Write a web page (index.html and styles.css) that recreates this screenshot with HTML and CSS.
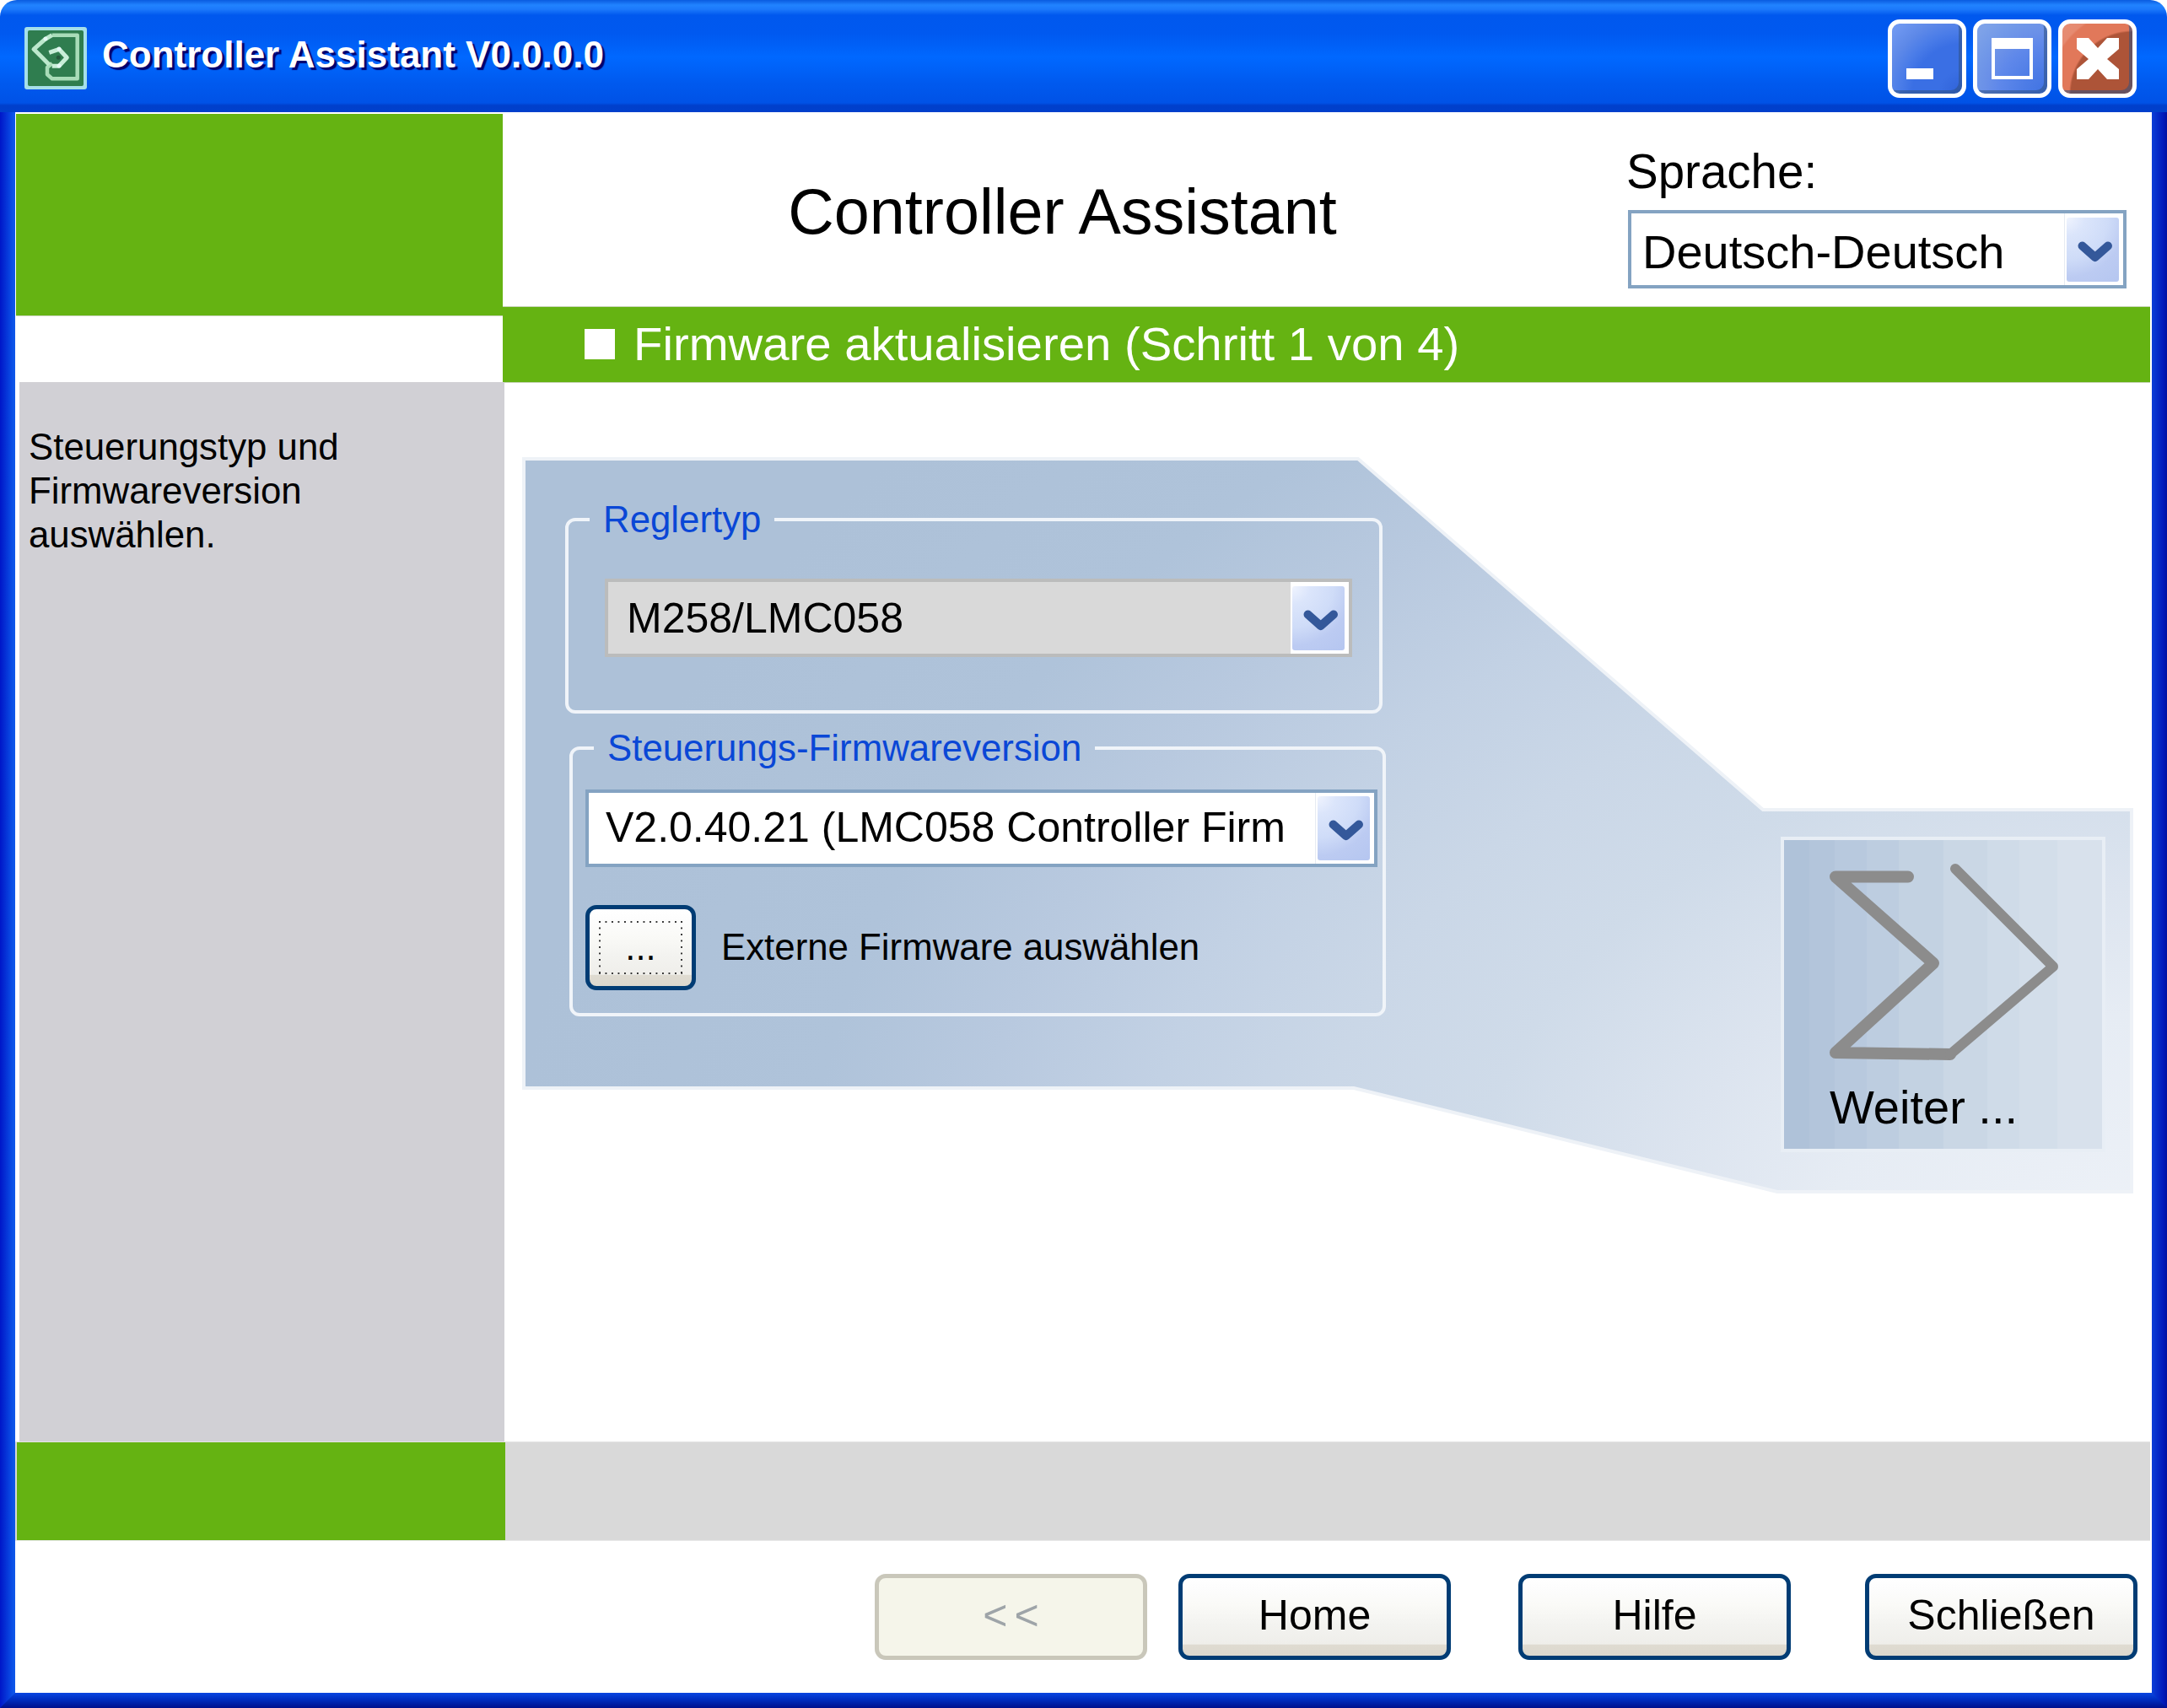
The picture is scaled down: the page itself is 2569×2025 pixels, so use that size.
FILE: index.html
```html
<!DOCTYPE html>
<html lang="de">
<head>
<meta charset="utf-8">
<title>Controller Assistant</title>
<link rel="stylesheet" href="styles.css">
</head>
<body>
<div class="window">
  <header class="titlebar">
    <svg class="app-icon" viewBox="0 0 74 74">
      <rect x="0" y="0" width="74" height="74" rx="3" fill="#a5dfe9"/>
      <rect x="4" y="4" width="66" height="66" rx="2" fill="#2f7d4f"/>
      <path d="M32.700 9.700H62.700V61.300H32.700L27 56.300V48L32.700 43" fill="none" stroke="#a8dcb8" stroke-width="4.500" stroke-linejoin="round"/>
      <path d="M32.700 9.700L24.300 14.700L11 26.300L21 36.300L29.300 44.700" fill="none" stroke="#bce8cc" stroke-width="5" stroke-linejoin="round"/>
      <path d="M29.300 30.300L41 26.300L50.300 36.300L41 46.300H32.700" fill="none" stroke="#c8eed8" stroke-width="5" stroke-linejoin="round"/>
      <circle cx="40.300" cy="36.300" r="2.500" fill="#24583c"/>
      <circle cx="25" cy="14" r="2.500" fill="#e4f8f4"/>
      <circle cx="41" cy="26" r="2.500" fill="#e4f8f4"/>
      <circle cx="41" cy="46" r="2.500" fill="#e4f8f4"/>
    </svg>
    <div class="app-title">Controller Assistant V0.0.0.0</div>
    <div class="wincontrols">
      <button class="winbtn winbtn-blue"><svg viewBox="0 0 83 83"><rect x="17" y="53" width="32" height="13" fill="#fff"/></svg></button>
      <button class="winbtn winbtn-blue winbtn-light"><svg viewBox="0 0 83 83"><path fill-rule="evenodd" d="M17 17H66V66H17ZM21 30V62H62V30Z" fill="#fff"/></svg></button>
      <button class="winbtn winbtn-red"><svg viewBox="0 0 83 83"><path d="M17 17H31L42 29L53 17H67V30L53 42L67 54V66H53L42 54L31 66H17V54L31 42L17 30Z" fill="#fff"/></svg></button>
    </div>
  </header>

  <div class="frame">
    <div class="edge edge-left"></div>
    <main class="client">
      <section class="top">
        <div class="top-left"><div class="green-block"></div></div>
        <div class="top-right">
          <div class="header">
            <h1 class="heading">Controller Assistant</h1>
            <div class="lang">
              <div class="lang-label">Sprache:</div>
              <div class="combo combo-lang">
                <span class="combo-text">Deutsch-Deutsch</span>
                <span class="combo-cell combo-cell-line"><span class="combo-btn"><svg viewBox="0 0 62 76"><path d="M18.500 33.500L33.700 47L49 33.500" fill="none" stroke="#34589a" stroke-width="10" stroke-linecap="round" stroke-linejoin="round"/></svg></span></span>
              </div>
            </div>
          </div>
          <div class="stepbar"><span class="step-square"></span><span class="step-text">Firmware aktualisieren (Schritt 1 von 4)</span></div>
        </div>
      </section>

      <section class="middle">
        <aside class="sidebar">Steuerungstyp und<br>Firmwareversion<br>auswählen.</aside>
        <div class="content">
          <div class="stage">
            <svg class="stage-bg" viewBox="0 0 1911 873">
              <defs>
                <radialGradient id="sweep" gradientUnits="userSpaceOnUse" cx="0" cy="0" r="1500" gradientTransform="translate(1930 960) scale(1.3 1)">
                  <stop offset="0" stop-color="#eef2f8"/>
                  <stop offset=".2" stop-color="#e6ecf4"/>
                  <stop offset=".3" stop-color="#dce4ef"/>
                  <stop offset=".42" stop-color="#cfdbe9"/>
                  <stop offset=".52" stop-color="#cad7e7"/>
                  <stop offset=".62" stop-color="#c2d1e4"/>
                  <stop offset=".72" stop-color="#b8c9df"/>
                  <stop offset=".82" stop-color="#afc3da"/>
                  <stop offset="1" stop-color="#adc1d8"/>
                </radialGradient>
              </defs>
              <path d="M2 2H991L1471 418H1908V871H1488L986 748H2Z" fill="url(#sweep)" stroke="#eef2f7" stroke-width="4"/>
            </svg>
            <div class="groups">
              <fieldset class="group group-type">
                <legend>Reglertyp</legend>
                <div class="combo combo-type">
                  <span class="combo-text">M258/LMC058</span>
                  <span class="combo-cell"><span class="combo-btn"><svg viewBox="0 0 62 76"><path d="M18.500 33.500L33.700 47L49 33.500" fill="none" stroke="#34589a" stroke-width="10" stroke-linecap="round" stroke-linejoin="round"/></svg></span></span>
                </div>
              </fieldset>
              <fieldset class="group group-fw">
                <legend>Steuerungs-Firmwareversion</legend>
                <div class="combo combo-fw">
                  <span class="combo-text">V2.0.40.21 (LMC058 Controller Firm</span>
                  <span class="combo-cell combo-cell-line"><span class="combo-btn"><svg viewBox="0 0 62 76"><path d="M18.500 33.500L33.700 47L49 33.500" fill="none" stroke="#34589a" stroke-width="10" stroke-linecap="round" stroke-linejoin="round"/></svg></span></span>
                </div>
                <div class="browse-row">
                  <button class="btn btn-browse"><span class="focus-dots">...</span></button>
                  <span class="browse-label">Externe Firmware auswählen</span>
                </div>
              </fieldset>
            </div>
            <button class="next">
              <svg class="next-icon" viewBox="0 0 377 285">
                <path d="M147 43.500H61L177 146L61 252L197 254" fill="none" stroke="#8c8c8c" stroke-width="14" stroke-linecap="round" stroke-linejoin="round"/>
                <path d="M197 254L319 150L203 34" fill="none" stroke="#8c8c8c" stroke-width="12" stroke-linecap="round" stroke-linejoin="round"/>
              </svg>
              <span class="next-label">Weiter ...</span>
            </button>
          </div>
        </div>
      </section>

      <section class="band"><div class="band-green"></div></section>

      <footer class="actions">
        <button class="btn btn-action btn-disabled btn-back">&lt;&lt;</button>
        <button class="btn btn-action btn-home">Home</button>
        <button class="btn btn-action btn-help">Hilfe</button>
        <button class="btn btn-action btn-close">Schließen</button>
      </footer>
    </main>
    <div class="edge edge-right"></div>
    <div class="edge-bottom"></div>
  </div>
</div>
</body>
</html>
```

FILE: styles.css
```css
* { box-sizing: border-box; }
html, body { margin: 0; padding: 0; background: #fff; }
body { width: 2569px; height: 2025px; overflow: hidden; font-family: "Liberation Sans", Arial, sans-serif; color: #000; }
button { font-family: inherit; padding: 0; }

.window { width: 2569px; height: 2025px; display: flex; flex-direction: column; }

/* Title bar */
.titlebar {
  height: 133px; flex: none; display: flex; align-items: center;
  border-radius: 20px 20px 0 0;
  background: linear-gradient(180deg, #0a5be0 0, #2183ff 6px, #1c79fb 11px, #0058ee 18px, #0059f0 40px, #0068ff 68px, #0059ee 100px, #0052e6 122px, #003fcb 125px, #0040cc 133px);
}
.app-icon { width: 74px; height: 74px; margin-left: 29px; margin-top: 5px; flex: none; }
.app-title {
  margin-left: 18px; margin-bottom: 4px; font-size: 44px; line-height: 50px; font-weight: 700; color: #fff;
  text-shadow: 3px 3px 1px #00006e;
}
.wincontrols { margin-left: auto; margin-right: 36px; margin-top: 6px; display: flex; gap: 8px; }
.winbtn {
  width: 93px; height: 93px; border: 5px solid #fff; border-radius: 14px; display: block;
  box-shadow: inset -4px -4px 0 rgba(45, 80, 130, .55);
}
.winbtn svg { display: block; width: 83px; height: 83px; }
.winbtn-blue { background: radial-gradient(circle at 100% 100%, #2f62d8 0, #3a6fe4 24%, #3a6fe4 50%, #4a7ce8 62%, #5e89e8 76%, #6e97f0 92%, #7099f2 100%); }
.winbtn-light { background: radial-gradient(circle at 100% 100%, #3f72e2 0, #4d7ce6 24%, #5f88ea 50%, #6a90e8 62%, #7299e8 76%, #7ea2e8 92%); }
.winbtn-red { background: radial-gradient(circle at 100% 100%, #ad5438 0, #ad5438 62%, #e1785a 64%, #e1785a 84%, #e68a70 86%, #e68e74 100%); }

/* Frame */
.frame { flex: 1; min-height: 0; display: grid; grid-template-columns: 18px 1fr 18px; grid-template-rows: 1fr 18px; }
.edge-left { grid-column: 1; grid-row: 1 / 3; background: linear-gradient(90deg, #0016c8, #0a4fe6 80%, #1059ea); }
.edge-right { grid-column: 3; grid-row: 1 / 3; background: linear-gradient(90deg, #0a3ed8, #0018b8 80%, #00129e); }
.edge-bottom {
  grid-column: 1 / 4; grid-row: 2;
  background: linear-gradient(180deg, #0a46e2, #0030c4 40%, #000f8c);
  clip-path: polygon(18px 0, calc(100% - 18px) 0, 100% 100%, 0 100%);
}
.client { grid-column: 2; grid-row: 1; background: #fff; min-width: 0; display: flex; flex-direction: column; }

/* Top */
.top { height: 320px; flex: none; display: flex; }
.top-left { width: 578px; flex: none; padding: 2px 0 0 1px; }
.green-block { height: 239px; background: #65b312; box-shadow: 0 1px 0 #cfd8c4; }
.top-right { flex: 1; display: flex; flex-direction: column; min-width: 0; }
.header { height: 230px; display: flex; flex: none; }
.heading { flex: 1; margin: 0; padding: 75px 7px 0 0; text-align: center; font-size: 75.500px; line-height: 86px; font-weight: 400; }
.lang { width: 591px; margin-right: 30px; padding-top: 39px; }
.lang-label { font-size: 56.500px; line-height: 64px; margin: 0 0 13px -2px; }
.stepbar {
  height: 90px; background: #65b312; margin-right: 2px; border-top: 1px solid #c8d4b8; box-shadow: 0 1px 0 #c8d4b8;
  display: flex; align-items: center; padding-left: 97px; color: #fff; font-size: 56.300px; line-height: 64px; gap: 22px;
}
.step-square { width: 36px; height: 36px; background: #fff; flex: none; margin-top: -2px; }
.step-text { margin-top: -2px; }

/* Combo */
.combo { display: flex; align-items: stretch; border: 4px solid #84a3c2; background: #fff; }
.combo-text { flex: 1; min-width: 0; white-space: nowrap; overflow: hidden; display: flex; align-items: center; }
.combo-cell { flex: none; display: flex; align-items: center; padding: 0 5px 0 2px; background: #fff; }
.combo-cell-line { border-left: 1px solid #e6ebf2; }
.combo-btn {
  display: block; width: 62px; height: 76px; border-radius: 3px;
  background: radial-gradient(circle at 0 0, #f0f4fe 0, #dbe5fb 22%, #cfdcf8 50%, #bccbf2 72%, #b5c6f0 100%);
}
.combo-btn svg { display: block; width: 62px; height: 76px; }
.combo-lang { height: 93px; font-size: 56px; }
.combo-lang .combo-text { padding: 6px 0 0 13px; }
.combo-type { margin: 45px 0 0 43px; width: 886px; height: 93px; font-size: 50px; border-color: #bbbcbc; background: #d9d9d9; }
.combo-type .combo-text { padding: 0 0 0 22px; }
.combo-type .combo-cell { padding-left: 2px; }
.combo-fw { margin: 24px 0 0 15px; width: 939px; height: 92px; font-size: 50px; }
.combo-fw .combo-text { padding: 0 0 3px 20px; }

/* Middle */
.middle { height: 1256px; flex: none; display: flex; }
.sidebar { width: 575px; margin-left: 5px; flex: none; background: #d1d0d5; padding: 51px 0 0 11px; font-size: 43.800px; line-height: 52px; }
.content { flex: 1; min-width: 0; padding: 89px 0 0 21px; }
.stage { position: relative; width: 1911px; height: 873px; display: flex; padding: 49px 34px 0 51px; }
.stage-bg { position: absolute; left: 0; top: 0; width: 1911px; height: 873px; display: block; }
.groups { position: relative; width: 974px; flex: none; }
.group { margin: 0; padding: 0; border: 4px solid #f0f4f9; border-radius: 12px; min-width: 0; }
.group legend { color: #0a47d6; font-size: 43.800px; line-height: 50px; padding: 0 16px; margin-left: 25px; white-space: nowrap; }
.group-type { width: 969px; padding-bottom: 63px; }
.group-fw { width: 968px; margin: 16px 0 0 5px; padding-bottom: 27px; }
.browse-row { display: flex; align-items: center; margin: 45px 0 0 15px; gap: 30px; }
.browse-label { font-size: 43.800px; margin-bottom: 2px; }

/* Buttons */
.btn {
  display: flex; align-items: center; justify-content: center; flex: none; color: #000;
  border: 5px solid #003c74; border-radius: 13px;
  background: linear-gradient(180deg, #fff 0, #fdfdfd 12%, #fafaf7 35%, #f3f3f0 60%, #efeeea 85%, #dfdbd1 86%, #dcd8ce 100%);
}
.btn-browse { width: 131px; height: 101px; }
.focus-dots {
  display: flex; align-items: flex-end; justify-content: center; width: 99px; height: 63px; padding-bottom: 7px; font-size: 43.500px; line-height: 50px;
  background:
    linear-gradient(90deg, #333 2px, transparent 2px) 0 0 / 7.500px 2px repeat-x,
    linear-gradient(90deg, #333 2px, transparent 2px) 0 100% / 7.500px 2px repeat-x,
    linear-gradient(180deg, #333 2px, transparent 2px) 0 0 / 2px 7.500px repeat-y,
    linear-gradient(180deg, #333 2px, transparent 2px) 100% 0 / 2px 7.500px repeat-y;
}
.btn-action { width: 323px; height: 102px; font-size: 50px; padding-bottom: 4px; }
.btn-disabled { border-color: #c9c7ba; background: #f5f5ea; color: #9ea4a8; letter-spacing: 8px; padding-left: 8px; }

/* Weiter */
.next {
  position: relative;
  margin: 401px 0 0 auto; width: 385px; height: 374px; flex: none; display: flex; flex-direction: column; align-items: flex-start; justify-content: flex-start; text-align: left;
  border: 4px solid #e8eef5; color: #000;
  background: linear-gradient(90deg, #afc2d9 0 8%, #b3c5db 8% 16%, #b8c9de 16% 26%, #bdcde0 26% 36%, #c3d2e2 36% 50%, #cad7e5 50% 64%, #cfdbe8 64% 74%, #d3deea 74% 86%, #d8e1ec 86% 100%);
}
.next-icon { display: block; width: 377px; height: 285px; flex: none; }
.next-label { display: block; font-size: 56px; line-height: 64px; padding-left: 54px; white-space: nowrap; }

/* Bottom */
.band { height: 117px; flex: none; margin-right: 2px; background: #d9d9d9; border-top: 1px solid #e4e4e4; box-shadow: 0 1px 0 #e8e8e8; }
.band-green { width: 579px; margin-left: 2px; height: 100%; background: #65b312; }
.actions { flex: 1; display: flex; padding: 40px 17px 0 0; align-items: flex-start; }
.btn-back { margin-left: auto; }
.btn-home { margin-left: 37px; }
.btn-help { margin-left: 80px; }
.btn-close { margin-left: 88px; }
```
